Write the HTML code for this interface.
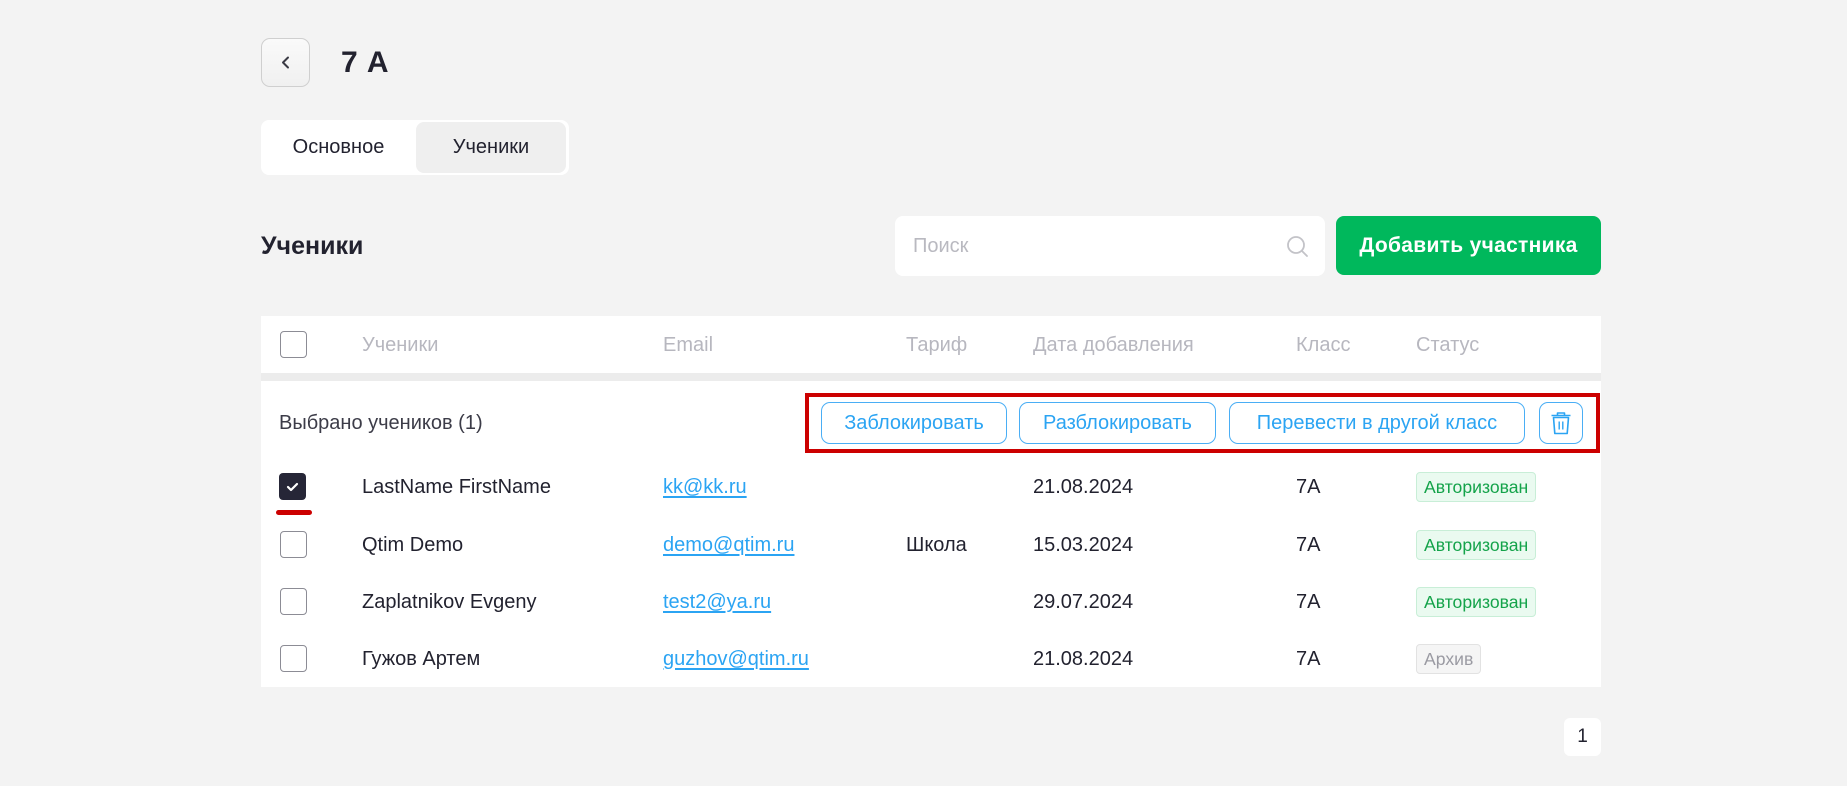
<!DOCTYPE html>
<html><head><meta charset="utf-8"><style>
*{box-sizing:border-box;margin:0;padding:0}
body{width:1847px;height:786px;background:#f3f3f3;font-family:"Liberation Sans",sans-serif;color:#22222f;position:relative;overflow:hidden}
.a{position:absolute}
.back{left:261px;top:38px;width:49px;height:49px;border:1px solid #cfcfcf;border-radius:9px;background:linear-gradient(#fafafa,#f0f0f0)}
.tabs{left:261px;top:120px;width:308px;height:55px;background:#fff;border-radius:8px}
.tab{position:absolute;top:2px;height:51px;line-height:51px;font-size:20px;text-align:center}
.card{background:#fff}
.hd{color:#b7b7bf;font-size:20px}
.cb{width:27px;height:27px;border:1.5px solid #8c8c95;border-radius:4px;background:#fff}
.txt{font-size:20px;color:#22222f}
.link{font-size:20px;color:#2ba4f3;text-decoration:underline;text-underline-offset:3px}
.badge{height:30px;line-height:28px;padding:0 7px;border-radius:4px;font-size:17.6px;border:1px solid #c8eed7;background:#eafaf0;color:#14a34a}
.btn{top:402px;height:42px;border:1.3px solid #4aaef5;border-radius:9px;color:#2ba4f3;font-size:20px;line-height:40px;text-align:center;background:#fff}
</style></head><body>
<div class="a back"><svg width="47" height="47" viewBox="0 0 47 47"><path d="M26 18.5l-5 5 5 5" fill="none" stroke="#3a3a44" stroke-width="2" stroke-linecap="round" stroke-linejoin="round"/></svg></div>
<div class="a" style="left:341px;top:46px;font-size:30px;font-weight:bold;letter-spacing:1px">7 A</div>
<div class="a tabs"><div class="tab" style="left:0;width:155px">Основное</div><div class="tab" style="left:155px;width:150px;background:#efefef;border-radius:8px">Ученики</div></div>
<div class="a" style="left:261px;top:232px;font-size:25px;font-weight:bold">Ученики</div>
<div class="a" style="left:895px;top:216px;width:430px;height:60px;background:#fff;border-radius:8px"><span class="a" style="left:18px;top:19px;font-size:20px;color:#b9b9c0">Поиск</span>
<svg class="a" style="left:391px;top:19px" width="24" height="24" viewBox="0 0 24 24"><circle cx="10" cy="10" r="8" fill="none" stroke="#c3c3c8" stroke-width="1.8"/><path d="M16 16l5 5" stroke="#c3c3c8" stroke-width="1.8" stroke-linecap="round"/></svg></div>
<div class="a" style="left:1336px;top:216px;width:265px;height:59px;background:#00b85c;border-radius:8px;color:#fff;font-size:21px;font-weight:bold;text-align:center;line-height:59px;letter-spacing:.3px">Добавить участника</div>

<div class="a card" style="left:261px;top:316px;width:1340px;height:57px"></div>
<div class="a cb" style="left:280px;top:331px"></div>
<div class="a hd" style="left:362px;top:334px">Ученики</div>
<div class="a hd" style="left:663px;top:334px">Email</div>
<div class="a hd" style="left:906px;top:334px">Тариф</div>
<div class="a hd" style="left:1033px;top:334px">Дата добавления</div>
<div class="a hd" style="left:1296px;top:334px">Класс</div>
<div class="a hd" style="left:1416px;top:334px">Статус</div>
<div class="a" style="left:261px;top:373px;width:1340px;height:8px;background:#ececec"></div>
<div class="a card" style="left:261px;top:381px;width:1340px;height:306px"></div>
<div class="a" style="left:279px;top:412px;font-size:20px;color:#3c3c48">Выбрано учеников (1)</div>
<div class="a" style="left:805px;top:393px;width:795px;height:60px;border:4px solid #cc0000"></div>
<div class="a btn" style="left:821px;width:186px">Заблокировать</div>
<div class="a btn" style="left:1019px;width:197px">Разблокировать</div>
<div class="a btn" style="left:1229px;width:296px">Перевести в другой класс</div>
<div class="a btn" style="left:1539px;width:44px"><svg width="42" height="40" viewBox="0 0 42 40"><path d="M11.5 12.5h19M17.5 12.5V10h7v2.5M13.5 14.5h15l-1.3 16h-12.4z" fill="none" stroke="#2ba4f3" stroke-width="1.6" stroke-linejoin="round"/><path d="M19.2 18.5v8M22.8 18.5v8" stroke="#2ba4f3" stroke-width="1.4"/></svg></div>

<div class="a" style="left:279px;top:473px;width:27px;height:27px;background:#262637;border-radius:4px"><svg width="27" height="27" viewBox="0 0 27 27"><path d="M9 14l3 3 6-6" fill="none" stroke="#fff" stroke-width="2.2" stroke-linecap="round" stroke-linejoin="round"/></svg></div>
<div class="a" style="left:276px;top:510px;width:36px;height:5px;background:#cc0000;border-radius:3px"></div>
<div class="a txt" style="left:362px;top:476px">LastName FirstName</div>
<div class="a link" style="left:663px;top:476px">kk@kk.ru</div>
<div class="a txt" style="left:1033px;top:476px">21.08.2024</div>
<div class="a txt" style="left:1296px;top:476px">7A</div>
<div class="a badge" style="left:1416px;top:472px">Авторизован</div>

<div class="a cb" style="left:280px;top:531px"></div>
<div class="a txt" style="left:362px;top:534px">Qtim Demo</div>
<div class="a link" style="left:663px;top:534px">demo@qtim.ru</div>
<div class="a txt" style="left:906px;top:534px">Школа</div>
<div class="a txt" style="left:1033px;top:534px">15.03.2024</div>
<div class="a txt" style="left:1296px;top:534px">7A</div>
<div class="a badge" style="left:1416px;top:530px">Авторизован</div>

<div class="a cb" style="left:280px;top:588px"></div>
<div class="a txt" style="left:362px;top:591px">Zaplatnikov Evgeny</div>
<div class="a link" style="left:663px;top:591px">test2@ya.ru</div>
<div class="a txt" style="left:1033px;top:591px">29.07.2024</div>
<div class="a txt" style="left:1296px;top:591px">7A</div>
<div class="a badge" style="left:1416px;top:587px">Авторизован</div>

<div class="a cb" style="left:280px;top:645px"></div>
<div class="a txt" style="left:362px;top:648px">Гужов Артем</div>
<div class="a link" style="left:663px;top:648px">guzhov@qtim.ru</div>
<div class="a txt" style="left:1033px;top:648px">21.08.2024</div>
<div class="a txt" style="left:1296px;top:648px">7A</div>
<div class="a badge" style="left:1416px;top:644px;background:#f5f5f5;border-color:#e2e2e2;color:#9b9ba3">Архив</div>

<div class="a" style="left:1564px;top:718px;width:37px;height:38px;background:#fff;border-radius:6px;text-align:center;line-height:38px;font-size:19px">1</div>
</body></html>
